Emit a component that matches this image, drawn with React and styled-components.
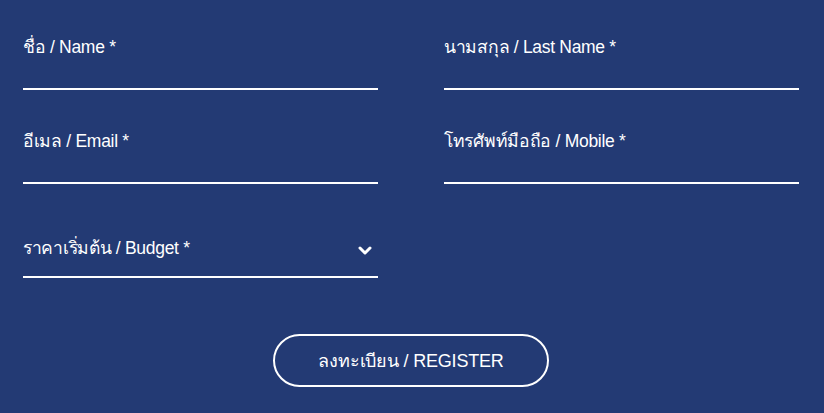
import styled, { createGlobalStyle } from "styled-components";

const GlobalStyle = createGlobalStyle`
  html, body {
    margin: 0;
    background: #233a74;
  }
  body {
    font-family: "Liberation Sans", Arial, sans-serif;
    color: #ffffff;
  }
`;

const Page = styled.div`
  width: 824px;
  height: 413px;
  background: #233a74;
  padding: 0 25px 0 23px;
  box-sizing: border-box;
`;

const Grid = styled.div`
  display: grid;
  grid-template-columns: 355px 355px;
  column-gap: 66px;
  row-gap: 4px;
`;

const Field = styled.label`
  display: flex;
  align-items: flex-start;
  justify-content: space-between;
  height: 90px;
  box-sizing: border-box;
  padding-top: ${(p) => p.$top || 37}px;
  border-bottom: 2px solid #ffffff;
  font-size: 17.5px;
  line-height: 20px;
  letter-spacing: -0.3px;
  cursor: text;
`;

const Chevron = styled.svg`
  width: 14px;
  height: 10px;
  margin: 8px 6px 0 0;
`;

const Actions = styled.div`
  display: flex;
  justify-content: center;
  padding-top: 56px;
`;

const Button = styled.button`
  width: 276px;
  height: 53px;
  border: 2px solid #ffffff;
  border-radius: 27px;
  background: transparent;
  color: #ffffff;
  font-family: "Liberation Sans", Arial, sans-serif;
  font-size: 18px;
  letter-spacing: -0.2px;
  cursor: pointer;
`;

export default function App() {
  return (
    <Page>
      <GlobalStyle />
      <Grid>
        <Field>ชื่อ / Name *</Field>
        <Field>นามสกุล / Last Name *</Field>
        <Field>อีเมล / Email *</Field>
        <Field>โทรศัพท์มือถือ / Mobile *</Field>
        <Field $top={50}>
          <span>ราคาเริ่มต้น / Budget *</span>
          <Chevron viewBox="0 0 14 10">
            <polyline
              points="2,2 7,7 12,2"
              fill="none"
              stroke="#fff"
              strokeWidth="3"
              strokeLinecap="round"
              strokeLinejoin="round"
            />
          </Chevron>
        </Field>
      </Grid>
      <Actions>
        <Button>ลงทะเบียน / REGISTER</Button>
      </Actions>
    </Page>
  );
}
